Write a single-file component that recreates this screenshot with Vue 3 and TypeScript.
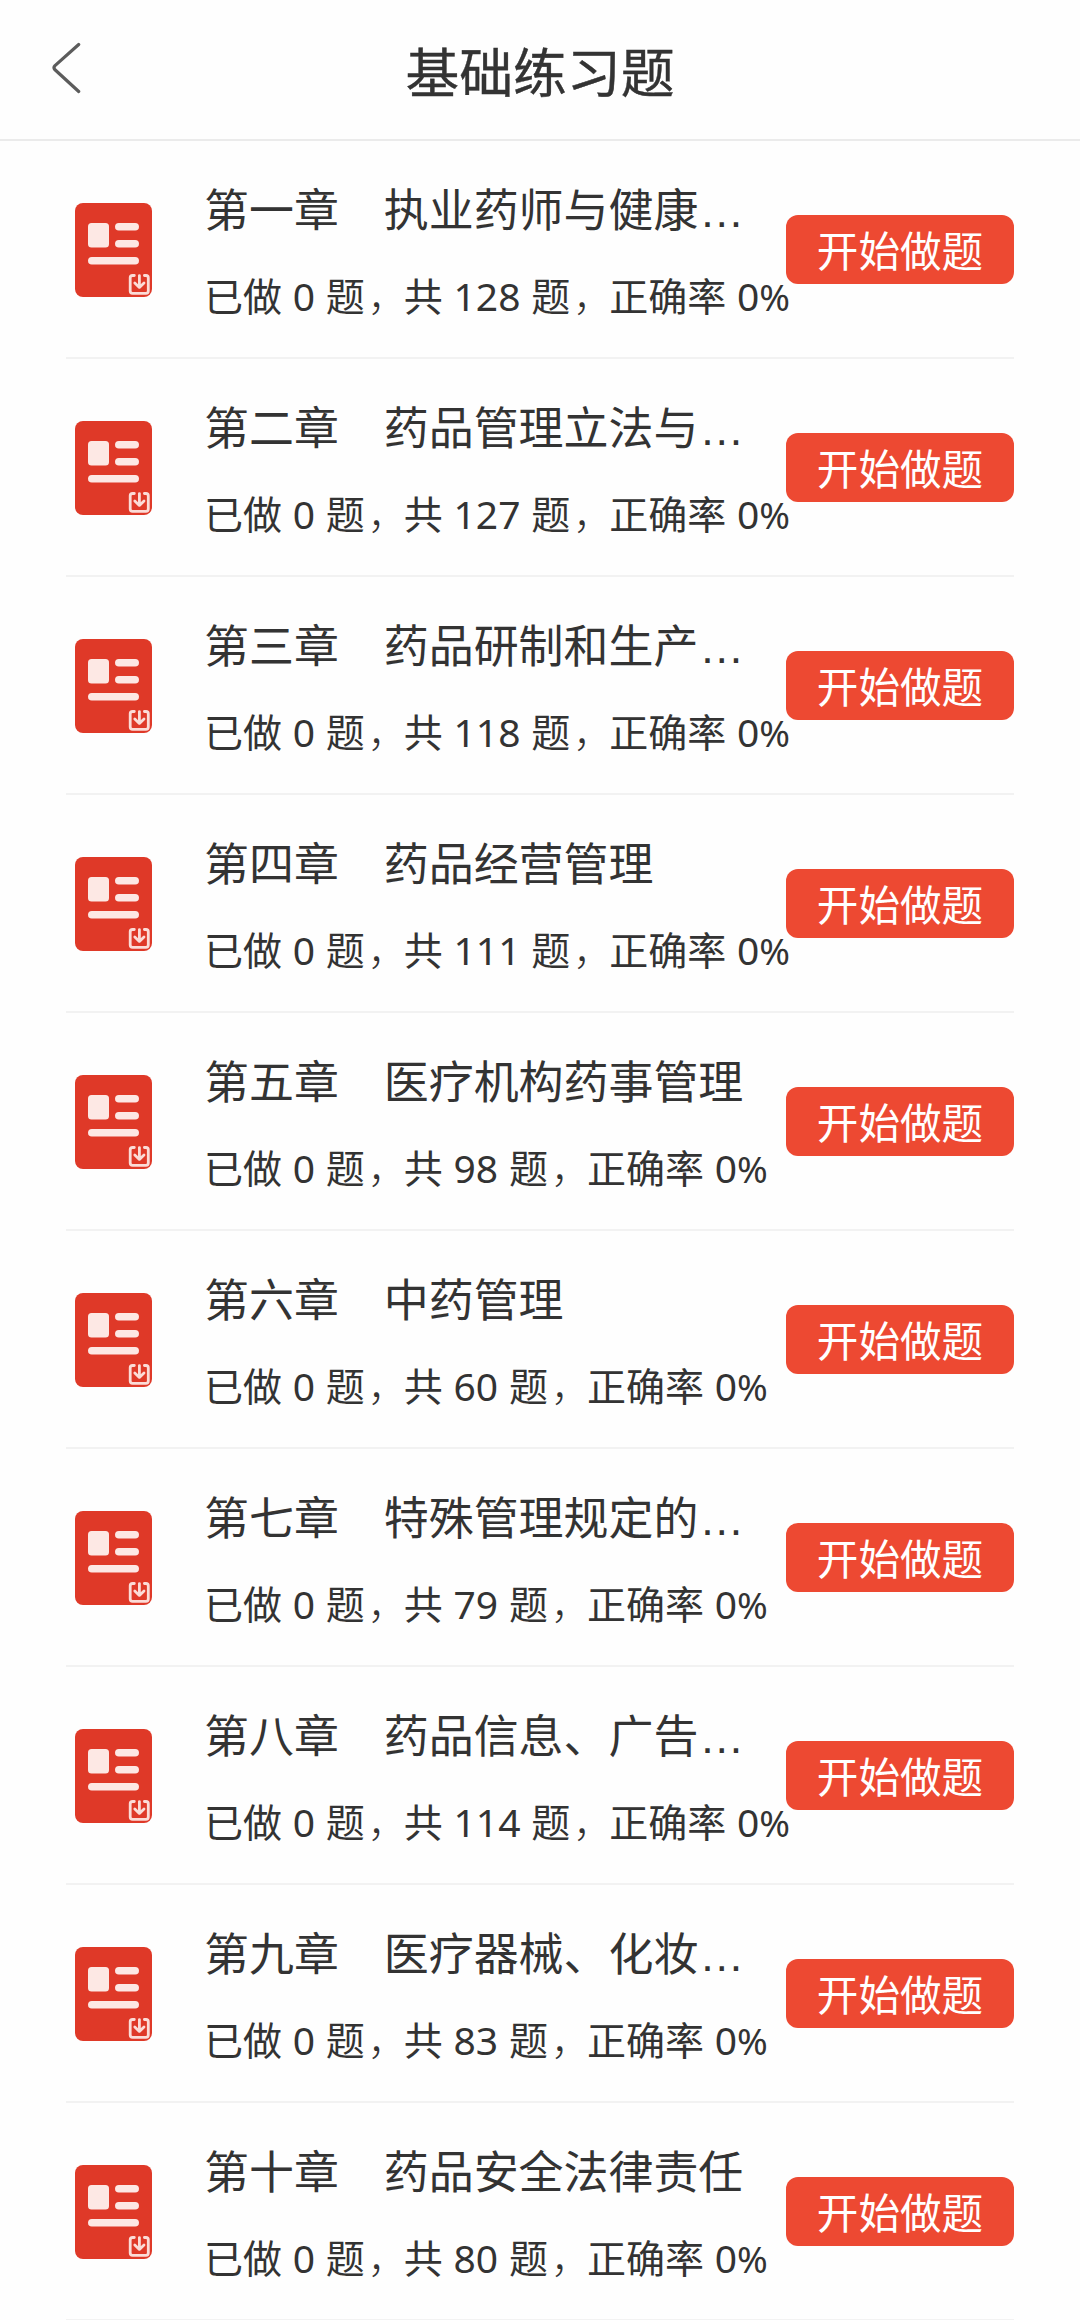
<script setup lang="ts">
interface Chapter {
  no: string
  name: string
  done: number
  total: number
  rate: number
  clipped?: boolean
}

const chapters: Chapter[] = [
  { no: '第一章', name: '执业药师与健康', done: 0, total: 128, rate: 0, clipped: true },
  { no: '第二章', name: '药品管理立法与', done: 0, total: 127, rate: 0, clipped: true },
  { no: '第三章', name: '药品研制和生产', done: 0, total: 118, rate: 0, clipped: true },
  { no: '第四章', name: '药品经营管理', done: 0, total: 111, rate: 0 },
  { no: '第五章', name: '医疗机构药事管理', done: 0, total: 98, rate: 0 },
  { no: '第六章', name: '中药管理', done: 0, total: 60, rate: 0 },
  { no: '第七章', name: '特殊管理规定的', done: 0, total: 79, rate: 0, clipped: true },
  { no: '第八章', name: '药品信息、广告', done: 0, total: 114, rate: 0, clipped: true },
  { no: '第九章', name: '医疗器械、化妆', done: 0, total: 83, rate: 0, clipped: true },
  { no: '第十章', name: '药品安全法律责任', done: 0, total: 80, rate: 0 },
]
</script>

<template>
  <div class="page" lang="zh-CN">
    <header class="header">
      <button class="back" aria-label="返回">
        <svg width="30" height="54" viewBox="0 0 30 54" fill="none">
          <path d="M27.7 3.5 L4 24.6 Q2 26.7 4 28.8 L27.7 50.5" stroke="#5c5c5c" stroke-width="3.2" stroke-linecap="round" stroke-linejoin="round" />
        </svg>
      </button>
      <h1>基础练习题</h1>
    </header>
    <ul class="list">
      <li v-for="c in chapters" :key="c.no" class="row">
        <svg class="book" width="77" height="94" viewBox="0 0 77 94">
          <rect width="77" height="94" rx="8" fill="#df3928" />
          <g fill="#fde8e4">
            <rect x="13" y="20" width="21" height="24.5" rx="3.5" />
            <rect x="40" y="20" width="24" height="7.6" rx="3.8" />
            <rect x="40" y="37" width="24" height="7.6" rx="3.8" />
            <rect x="13" y="54" width="51" height="7.6" rx="3.8" />
          </g>
          <g fill="none" stroke="#fbdcd7" stroke-width="2.8" stroke-linecap="round" stroke-linejoin="round">
            <path d="M59.3 72.5 H57.6 Q55.2 72.5 55.2 74.7 V88 Q55.2 90.3 57.6 90.3 H71 Q73.3 90.3 73.3 88 V74.7 Q73.3 72.5 71 72.5 H69.4" />
            <path d="M64.4 72.6 V84 M59.8 80 L64.4 84.4 L69 80" />
          </g>
        </svg>
        <div class="info">
          <div class="name">{{ c.no }}　{{ c.name }}<span v-if="c.clipped" class="dots">…</span></div>
          <div class="stat">已做 {{ c.done }} 题<span class="comma">，</span>共 {{ c.total }} 题<span class="comma">，</span>正确率 {{ c.rate }}<span class="pct">%</span></div>
        </div>
        <button class="start">开始做题</button>
      </li>
    </ul>
  </div>
</template>

<style>
body {
  margin: 0;
  background: #fefefe;
}
</style>

<style scoped>
.page {
  width: 1080px;
  height: 2320px;
  overflow: hidden;
  background: #fefefe;
  color: #333;
  font-family: "Noto Sans", "Noto Sans CJK SC", sans-serif;
}
button {
  border: 0;
  padding: 0;
  background: none;
  font-family: inherit;
}
.header {
  box-sizing: border-box;
  height: 141px;
  display: grid;
  grid-template-columns: 130px 1fr 130px;
  align-items: center;
  border-bottom: 2px solid #ebebeb;
}
.back {
  height: 54px;
  padding-left: 51px;
  margin-bottom: 3px;
  text-align: left;
}
.back svg {
  display: block;
}
h1 {
  margin: 4px 0 0;
  text-align: center;
  font-size: 53.8px;
  line-height: 80px;
  font-weight: 400;
  -webkit-text-stroke: 0.4px #333;
}
.list {
  margin: 0;
  padding: 0 66px;
  list-style: none;
}
.row {
  box-sizing: border-box;
  height: 218px;
  display: flex;
  align-items: flex-start;
  border-bottom: 2px solid #f2f2f2;
}
.book {
  flex: none;
  margin: 62px 53px 0 9px;
}
.info {
  flex: none;
  width: 582px;
  margin-left: -1px;
  padding-top: 39px;
  white-space: nowrap;
}
.name {
  height: 60px;
  line-height: 60px;
  font-size: 44.95px;
}
.dots {
  margin-left: 1px;
  font-family: "Liberation Sans", sans-serif;
}
.stat {
  height: 54px;
  line-height: 54px;
  margin-top: 29px;
  font-size: 39px;
  word-spacing: 0.6px;
}
.comma {
  padding-left: 3px;
  margin-right: -3px;
  font-weight: 300;
}
.pct {
  font-size: 37px;
}
.start {
  flex: none;
  width: 228px;
  height: 69px;
  margin-top: 74px;
  padding-top: 3px;
  border-radius: 12px;
  background: #ed4932;
  color: #fff;
  font-size: 41.6px;
  line-height: 66px;
  text-align: center;
}
</style>
